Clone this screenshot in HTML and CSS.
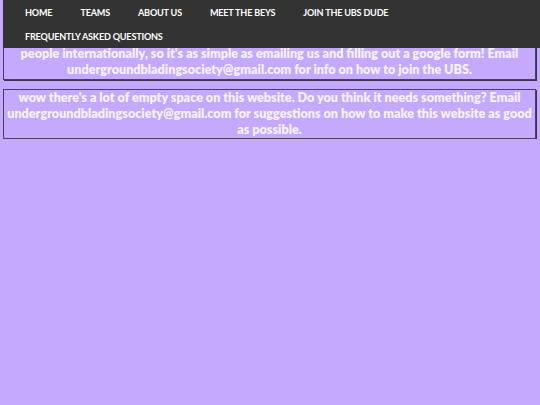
FILE: index.html
```html
<!DOCTYPE html>
<html>
<head>
<meta charset="utf-8">
<link rel="stylesheet" href="styles.css">
</head>
<body>
<nav class="topnav">
  <ul class="menu">
    <li><a href="#">HOME</a></li>
    <li><a href="#">TEAMS</a></li>
    <li><a href="#">ABOUT US</a></li>
    <li><a href="#">MEET THE BEYS</a></li>
    <li><a href="#">JOIN THE UBS DUDE</a></li>
    <li><a href="#">FREQUENTLY ASKED QUESTIONS</a></li>
  </ul>
</nav>
<main class="content">
  <div class="box box-first">
    <p>people internationally, so it's as simple as emailing us and filling out a google form! Email undergroundbladingsociety@gmail.com for info on how to join the UBS.</p>
  </div>
  <div class="box">
    <p>wow there's a lot of empty space on this website. Do you think it needs something? Email undergroundbladingsociety@gmail.com for suggestions on how to make this website as good as possible.</p>
  </div>
</main>
</body>
</html>
```
FILE: styles.css
```css
html, body {
  margin: 0;
  padding: 0;
  background: #c4a9fe;
}
body {
  font-family: "Lato", "Open Sans", sans-serif;
}
.topnav {
  position: fixed;
  top: 0;
  left: 3px;
  right: 0;
  height: 48px;
  background: #333333;
  z-index: 10;
}
.menu {
  list-style: none;
  margin: 0;
  padding: 0 0 0 8px;
  display: flex;
  flex-wrap: wrap;
}
.menu li {
  height: 24px;
  display: flex;
  align-items: center;
}
.menu a {
  color: #ffffff;
  text-decoration: none;
  font-weight: 700;
  font-size: 9.1px;
  padding: 0 14px;
  letter-spacing: -0.2px;
}
.content {
  padding: 45px 4px 0 3px;
  display: flex;
  flex-direction: column;
  gap: 9px;
}
.box {
  border: 1px solid #4a3f63;
  box-shadow: 1px 1px 0 #3a3350;
  text-align: center;
}
.box-first p {
  padding-bottom: 1px;
}
.box p {
  margin: 0;
  color: #f6f1ff;
  font-weight: 800;
  font-size: 12.6px;
  line-height: 16px;
}
```
